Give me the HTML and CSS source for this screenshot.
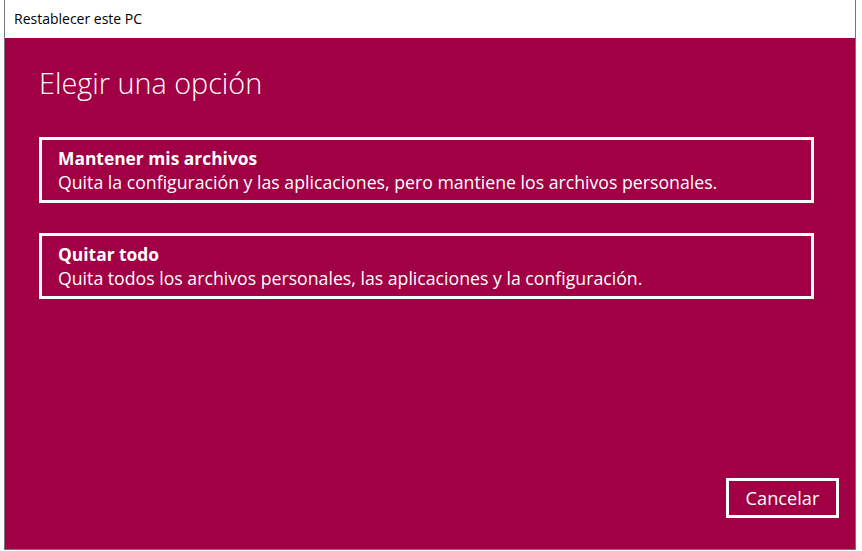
FILE: index.html
```html
<!DOCTYPE html>
<html lang="es">
<head>
<meta charset="utf-8">
<title>Restablecer este PC</title>
<link rel="stylesheet" href="styles.css">
</head>
<body>
<div class="window">
  <div class="titlebar">Restablecer este PC</div>
  <div class="content">
    <h1 class="heading">Elegir una opción</h1>
    <div class="options">
      <div class="option">
        <div class="opt-title">Mantener mis archivos</div>
        <div class="opt-desc">Quita la configuración y las aplicaciones, pero mantiene los archivos personales.</div>
      </div>
      <div class="option">
        <div class="opt-title">Quitar todo</div>
        <div class="opt-desc">Quita todos los archivos personales, las aplicaciones y la configuración.</div>
      </div>
    </div>
    <div class="footer">
      <div class="btn">Cancelar</div>
    </div>
  </div>
</div>
</body>
</html>
```
FILE: styles.css
```css
html, body {
  margin: 0;
  padding: 0;
  background: #ffffff;
}
body {
  width: 862px;
  height: 551px;
  font-family: "Open Sans", "Noto Sans", sans-serif;
}
.window {
  margin-left: 4px;
  width: 850px;
  height: 549px;
  border: 1px solid #777777;
  border-top: 0;
  display: flex;
  flex-direction: column;
}
.titlebar {
  height: 38px;
  background: #ffffff;
  color: #000000;
  font-size: 14px;
  line-height: 37px;
  padding-left: 9px;
  box-sizing: border-box;
}
.content {
  flex: 1;
  background: #a10044;
  color: #ffffff;
  display: flex;
  flex-direction: column;
  padding: 0 16px 0 34px;
}
.heading {
  margin: 26px 0 0 0;
  font-weight: 300;
  font-size: 28.8px;
  line-height: 38px;
}
.options {
  margin-top: 35px;
  display: flex;
  flex-direction: column;
  gap: 30px;
  width: 775px;
}
.option {
  border: 3px solid #ffffff;
  height: 66px;
  box-sizing: border-box;
  padding: 7px 0 0 16px;
}
.opt-title {
  font-weight: 700;
  font-size: 17.4px;
  line-height: 23px;
}
.opt-desc {
  font-size: 17.7px;
  line-height: 24px;
}
.footer {
  margin-top: auto;
  margin-bottom: 31px;
  display: flex;
  justify-content: flex-end;
}
.btn {
  width: 113px;
  height: 40px;
  box-sizing: border-box;
  border: 3px solid #ffffff;
  font-size: 18.2px;
  line-height: 35px;
  text-align: center;
}
```
